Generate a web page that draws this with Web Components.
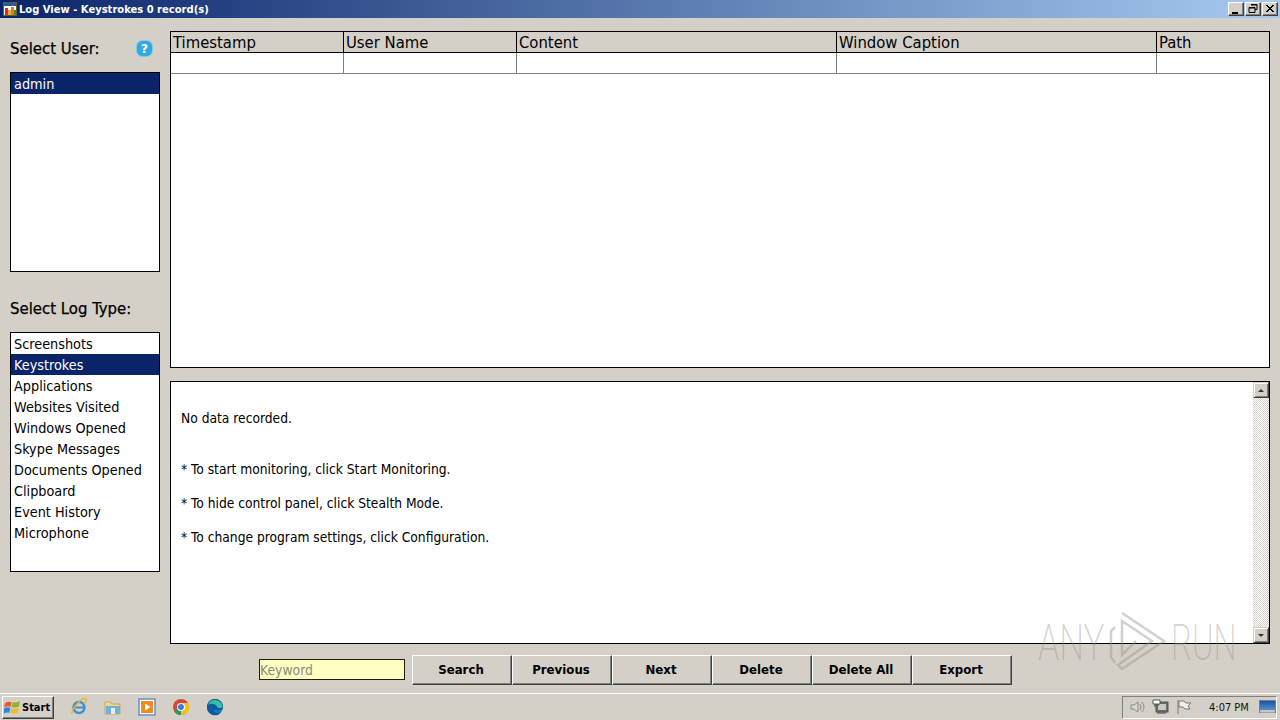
<!DOCTYPE html>
<html><head><meta charset="utf-8">
<style>
html,body{margin:0;padding:0;width:1280px;height:720px;overflow:hidden;background:#d4d0c8;font-family:"DejaVu Sans",sans-serif;color:#000}
</style></head><body>
<log-app></log-app>
<script>
const FONT='"DejaVu Sans","Noto Sans",sans-serif';
function def(name,html,init){customElements.define(name,class extends HTMLElement{constructor(){super();this.attachShadow({mode:'open'}).innerHTML=html;}connectedCallback(){if(init)init(this);}});}

def('win-ctrl',`<style>:host{display:block;width:16px;height:14px;box-sizing:border-box;background:#d4d0c8;border:1px solid;border-color:#fff #404040 #404040 #fff;box-shadow:inset -1px -1px 0 #808080}svg{display:block;width:14px;height:12px}</style><svg viewBox="0 0 14 12"></svg>`,
 el=>{const k=el.getAttribute('kind');const p={min:'<path d="M3 9h6v2H3z" fill="#000"/>',max:'<path d="M5 1.500h6v5h-2M3 4.500h6v5H3z" fill="none" stroke="#000"/><path d="M5 1h6v1.500H5zM3 4h6v1.500H3z"/>',close:'<path d="M3 2l7 7M4 2l7 7M10 2l-7 7M11 2l-7 7" stroke="#000" fill="none"/>'}[k];el.shadowRoot.querySelector('svg').innerHTML=p;});

def('win-titlebar',`<style>
:host{display:flex;align-items:center;height:18px;background:linear-gradient(90deg,#0a246a 0,#a6caf0 100%);padding:0 2px 0 3px;box-sizing:border-box;color:#fff;font:bold 11.100px ${FONT};font-stretch:condensed}
svg{width:14px;height:14px;margin-right:2px;flex:none}
.t{flex:1;white-space:nowrap;padding-top:1px}
.c{display:flex;gap:1px}
</style>
<svg viewBox="0 0 14 14"><rect x=".5" y=".5" width="13" height="13" fill="#fff" stroke="#6a5a3a"/><rect x="1" y="1" width="12" height="3" fill="#2a5a9a"/><rect x="2" y="6" width="3" height="7" fill="#d83020"/><rect x="5" y="8" width="3" height="5" fill="#e8b020"/><rect x="8" y="5" width="3" height="8" fill="#e87820"/><rect x="11" y="8" width="2" height="5" fill="#30902c"/></svg>
<span class="t"><slot></slot></span>
<span class="c"><win-ctrl kind="min"></win-ctrl><win-ctrl kind="max"></win-ctrl><win-ctrl kind="close"></win-ctrl></span>`);

def('win-label',`<style>:host{display:flex;align-items:center;justify-content:space-between;height:22px;font:500 16.600px ${FONT};font-stretch:condensed;-webkit-text-stroke:.25px #000;white-space:nowrap}</style><slot></slot>`);

def('help-icon',`<style>:host{display:block;width:17px;height:17px}svg{display:block}text{font:bold 12px ${FONT}}</style>
<svg width="17" height="17" viewBox="0 0 17 17"><rect x=".5" y=".5" width="16" height="16" rx="6" fill="#35a9dc" stroke="#7fcdec"/><text x="8.500" y="13" text-anchor="middle" fill="#fff">?</text></svg>`);

def('win-listbox',`<style>:host{display:block;box-sizing:border-box;border:1px solid #000;background:#fff;overflow:hidden}</style><slot></slot>`);
def('win-option',`<style>:host{display:block;box-sizing:border-box;height:21px;padding:1px 0 0 3px;font:14.300px/21px ${FONT};font-stretch:condensed;color:#000;white-space:nowrap;overflow:hidden}
:host([selected]){background:#0a246a;color:#fff}</style><slot></slot>`);

def('win-grid',`<style>
:host{display:block;box-sizing:border-box;border:1px solid #000;background:#fff;font:16.500px ${FONT};font-stretch:condensed}
.r{display:grid;grid-template-columns:173px 173px 320px 320px 1fr}
.h{height:21px;background:#d4d0c8;border-bottom:1px solid #000;box-sizing:border-box}
.h div{padding:1px 0 0 2px;height:20px;box-sizing:border-box;line-height:20px;border-right:1px solid #000;white-space:nowrap;overflow:hidden}
.h div:last-child,.b div:last-child{border-right:0}
.b{height:21px;border-bottom:1px solid #808080;box-sizing:border-box}
.b div{border-right:1px solid #808080}
</style>
<div class="r h"><div>Timestamp</div><div>User Name</div><div>Content</div><div>Window Caption</div><div>Path</div></div>
<div class="r b"><div></div><div></div><div></div><div></div><div></div></div>`);

def('win-memo',`<style>
:host{display:flex;box-sizing:border-box;border:1px solid #000;background:#fff;font:13.700px ${FONT};font-stretch:condensed}
.c{flex:1;padding:28px 0 0 10px}
p{margin:0 0 17px;line-height:17px}
p:first-child{margin-bottom:34px}
.s{width:16px;display:flex;flex-direction:column;background:conic-gradient(#d4d0c8 25%,#fff 0 50%,#d4d0c8 0 75%,#fff 0) 0 0/2px 2px}
.b{height:16px;box-sizing:border-box;background:#d4d0c8;border:1px solid;border-color:#d4d0c8 #404040 #404040 #d4d0c8;box-shadow:inset 1px 1px 0 #fff,inset -1px -1px 0 #808080;display:flex;align-items:center;justify-content:center}
.t{flex:1}
.a{width:0;height:0;border:3.500px solid transparent}
.u{border-bottom-color:#333;border-top:0}
.d{border-top-color:#333;border-bottom:0}
</style>
<div class="c"><p>No data recorded.</p><p>* To start monitoring, click Start Monitoring.</p><p>* To hide control panel, click Stealth Mode.</p><p>* To change program settings, click Configuration.</p></div>
<div class="s"><div class="b"><span class="a u"></span></div><div class="t"></div><div class="b"><span class="a d"></span></div></div>`);

def('win-button',`<style>:host{display:flex;align-items:center;justify-content:center;box-sizing:border-box;width:100px;height:30px;padding:0 2px 2px 0;background:#d4d0c8;border:1px solid;border-color:#fff #404040 #404040 #fff;box-shadow:inset -1px -1px 0 #808080;font:bold 13.100px ${FONT};font-stretch:condensed}</style><slot></slot>`);

def('win-keyword',`<style>:host{display:flex;align-items:center;box-sizing:border-box;width:146px;height:21px;background:#ffffc4;border:1px solid #202000;color:#8a8a78;font:13.800px ${FONT};font-stretch:condensed;padding-left:0}</style><slot></slot>`);

def('any-watermark',`<style>:host{position:absolute;left:1038px;top:606px;width:200px;height:70px;display:flex;align-items:center;pointer-events:none;color:rgba(150,146,136,.42);font:200 50px Roboto,sans-serif}
span{display:inline-block;transform:translateY(2px) scaleX(.7);transform-origin:left center;white-space:nowrap}
.a{width:70px}.r{width:62px;margin-left:3px;transform:translateY(2px) scaleX(.65)}
svg{flex:none}
</style><span class="a">ANY</span><svg width="60" height="68" viewBox="0 0 60 68" fill="none" stroke="rgba(150,146,136,.42)" stroke-width="2.500"><path d="M7 20L3 24V50L7 56M14 6L56 34L14 62L10 58L44 34L14 14V48L28 34"/></svg><span class="r">RUN</span>`);

def('task-btn',`<style>:host{display:flex;align-items:center;box-sizing:border-box;width:52px;height:23px;gap:1px;background:#d4d0c8;border:1px solid;border-color:#fff #404040 #404040 #fff;box-shadow:inset -1px -1px 0 #808080;font:bold 11px ${FONT};font-stretch:condensed;padding-left:1px}
svg{flex:none}</style>
<svg width="17" height="17" viewBox="0 0 16 16"><path d="M1 4Q4 2 7 3L6 7.500Q3 6 0 8Z" fill="#e8562a"/><path d="M8 3Q11 4 15 2L14 7Q10 8.500 7 7.500Z" fill="#8ab82c"/><path d="M0 9Q3 7 6 8.500L5 13Q2 12 -.500 14Z" fill="#2f86d8"/><path d="M7 8.500Q10 10 14 8L13 13Q9 14.500 6 13Z" fill="#f0bc26"/></svg><slot></slot>`);

def('tray-area',`<style>:host{display:flex;align-items:center;box-sizing:border-box;height:23px;width:155px;border:1px solid;border-color:#808080 #fff #fff #808080;padding-left:6px;font:11px ${FONT};font-stretch:condensed;color:#111}
svg{flex:none}.v{margin-left:5px}.f{margin-left:7px}.t{margin-left:17px;white-space:nowrap;width:50px}</style>
<svg width="18" height="16" viewBox="0 0 18 16" fill="none" stroke="#8a8a88"><path d="M2 6h3l4-3v10l-4-3H2z" fill="#d8d8d6"/><path d="M11 5q2 3 0 6M13 3q4 5 0 10"/></svg>
<svg class="v" width="17" height="16" viewBox="0 0 17 16"><rect x="4" y="3" width="12" height="10" fill="#6a6a68" stroke="#555"/><rect x="6" y="5" width="8" height="6" fill="#c8c8c4"/><path d="M1 1h7v4H1z" fill="#fff" stroke="#555"/><path d="M3 5v3M6 5v2M5 14h9" stroke="#444"/></svg>
<svg class="f" width="16" height="16" viewBox="0 0 16 16" fill="none" stroke="#777"><path d="M2 1v14"/><path d="M3 2h5l2 2h5l-3 3 2 3H9L7 8H3z" fill="#eeeeea"/></svg>
<span class="t"><slot></slot></span>
<svg width="17" height="14" viewBox="0 0 17 14"><defs><linearGradient id="g" x1="0" y1="0" x2="0" y2="1"><stop offset="0" stop-color="#1c4f9c"/><stop offset="1" stop-color="#5fa0dc"/></linearGradient></defs><rect x=".5" y=".5" width="16" height="12" fill="url(#g)" stroke="#6a7f9a"/><rect x="1" y="10" width="15" height="2.500" fill="#c8c4bc"/></svg>`);

def('win-taskbar',`<style>
:host{display:flex;align-items:center;height:27px;box-sizing:border-box;border-top:1px solid #fff;background:#d4d0c8;padding:0 3px 0 2px}
.q{display:flex;align-items:center;gap:16px;margin-left:16px}
svg{display:block;flex:none}
.sp{flex:1}
</style>
<task-btn>Start</task-btn>
<div class="q">
<svg width="18" height="18" viewBox="0 0 18 18" fill="none"><circle cx="9" cy="9.500" r="5.500" stroke="#3f8fd2" stroke-width="2.500"/><path d="M4 9.500h10" stroke="#3f8fd2" stroke-width="2"/><path d="M2 16Q1 13 7 6T16 1Q17 3 14 6" stroke="#e8b830" stroke-width="1.500"/></svg>
<svg width="18" height="18" viewBox="0 0 18 18"><path d="M1 4h6l1 2h8v10H1z" fill="#f0d890" stroke="#c8a850"/><rect x="2" y="8" width="14" height="8" fill="#6fb0dc"/><rect x="7" y="10" width="4" height="6" fill="#e8f0f4"/></svg>
<svg width="18" height="18" viewBox="0 0 18 18"><rect x="1" y="1" width="16" height="16" fill="#fff" stroke="#6a8fc0" stroke-width="1.500"/><rect x="3" y="3" width="12" height="12" fill="#ec8a24"/><path d="M7 5.500l5.500 3.500L7 12.500z" fill="#fff"/></svg>
<svg width="18" height="18" viewBox="0 0 18 18"><circle cx="9" cy="9" r="8" fill="#dc4437"/><path d="M9 5h7.400A8 8 0 0 1 9 17z" fill="#f4c020"/><path d="M9 9L9 17A8 8 0 0 1 2 13z" fill="#2a9d52"/><circle cx="9" cy="9" r="4" fill="#fff"/><circle cx="9" cy="9" r="3" fill="#3a7de0"/></svg>
<svg width="18" height="18" viewBox="0 0 18 18"><circle cx="9" cy="9" r="8" fill="#1277bb"/><path d="M1 9a8 8 0 0 1 16 0c0 2-2 3-4 3H7c1 2 4 4 8 2.500A8 8 0 0 1 1 9z" fill="#0d5b9e"/><path d="M2 7a7.500 7.500 0 0 1 14.500 1.500C16 10.500 14 10 12 10 11 7 6 4 2 7z" fill="#38c0a0"/></svg>
</div>
<div class="sp"></div>
<tray-area>4:07 PM</tray-area>`);

def('log-app',`<style>
:host{display:flex;flex-direction:column;width:1280px;height:720px;position:relative}
.main{flex:1;display:grid;grid-template-columns:150px 1100px;gap:10px;padding:13px 0 0 10px;min-height:0}
.l{display:flex;flex-direction:column;padding-top:6px}
.r{display:flex;flex-direction:column}
.sel{height:22px;margin-right:7px}
.u{height:200px;margin-top:13px}
.lt{margin-top:25px}
.ty{height:240px;margin-top:13px}
win-grid{height:337px}
win-memo{height:263px;margin-top:13px}
.bar{display:flex;align-items:center;margin-top:11px;padding-left:89px;height:30px}
win-keyword{margin:-1px 7px 0 0}
</style>
<win-titlebar>Log View - Keystrokes 0 record(s)</win-titlebar>
<div class="main">
 <div class="l">
  <win-label class="sel">Select User:<help-icon></help-icon></win-label>
  <win-listbox class="u"><win-option selected>admin</win-option></win-listbox>
  <win-label class="lt">Select Log Type:</win-label>
  <win-listbox class="ty"><win-option>Screenshots</win-option><win-option selected>Keystrokes</win-option><win-option>Applications</win-option><win-option>Websites Visited</win-option><win-option>Windows Opened</win-option><win-option>Skype Messages</win-option><win-option>Documents Opened</win-option><win-option>Clipboard</win-option><win-option>Event History</win-option><win-option>Microphone</win-option></win-listbox>
 </div>
 <div class="r">
  <win-grid></win-grid>
  <win-memo></win-memo>
  <div class="bar"><win-keyword>Keyword</win-keyword><win-button>Search</win-button><win-button>Previous</win-button><win-button>Next</win-button><win-button>Delete</win-button><win-button>Delete All</win-button><win-button>Export</win-button></div>
 </div>
</div>
<win-taskbar></win-taskbar>
<any-watermark></any-watermark>`);
</script>
</body></html>
